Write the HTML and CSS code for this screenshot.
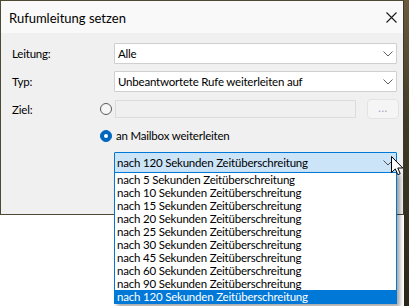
FILE: index.html
```html
<!DOCTYPE html>
<html lang="de">
<head>
<meta charset="utf-8">
<link rel="stylesheet" href="styles.css">
</head>
<body>
<div class="screen">
  <div class="main">
    <div class="dialog">
      <div class="titlebar">
        <span class="title">Rufumleitung setzen</span>
        <svg class="close" width="11" height="11" viewBox="0 0 11 11"><path d="M0.5 0.5 L10.5 10.5 M10.5 0.5 L0.5 10.5" stroke="#1a1a1a" stroke-width="1.1" fill="none"/></svg>
      </div>
      <div class="content">
        <div class="row">
          <span class="label">Leitung:</span>
          <div class="combo"><span class="value">Alle</span><svg class="chev" width="10" height="6" viewBox="0 0 10 6"><path d="M0.5 0.5 L5 5 L9.5 0.5" stroke="#606060" stroke-width="1" fill="none"/></svg></div>
        </div>
        <div class="row">
          <span class="label">Typ:</span>
          <div class="combo"><span class="value">Unbeantwortete Rufe weiterleiten auf</span><svg class="chev" width="10" height="6" viewBox="0 0 10 6"><path d="M0.5 0.5 L5 5 L9.5 0.5" stroke="#606060" stroke-width="1" fill="none"/></svg></div>
        </div>
        <div class="row ziel">
          <span class="label short">Ziel:</span>
          <span class="radio"></span>
          <div class="textbox"></div>
          <div class="btn">...</div>
        </div>
        <div class="row mailbox">
          <span class="radio checked"></span>
          <span class="radio-label">an Mailbox weiterleiten</span>
        </div>
        <div class="row indent">
          <div class="combo focus"><span class="value">nach 120 Sekunden Zeitüberschreitung</span><svg class="chev" width="10" height="6" viewBox="0 0 10 6"><path d="M0.5 0.5 L5 5 L9.5 0.5" stroke="#505050" stroke-width="1" fill="none"/></svg></div>
        </div>
      </div>
    </div>
  </div>
  <div class="strip"></div>
  <ul class="droplist">
    <li>nach 5 Sekunden Zeitüberschreitung</li>
    <li>nach 10 Sekunden Zeitüberschreitung</li>
    <li>nach 15 Sekunden Zeitüberschreitung</li>
    <li>nach 20 Sekunden Zeitüberschreitung</li>
    <li>nach 25 Sekunden Zeitüberschreitung</li>
    <li>nach 30 Sekunden Zeitüberschreitung</li>
    <li>nach 45 Sekunden Zeitüberschreitung</li>
    <li>nach 60 Sekunden Zeitüberschreitung</li>
    <li>nach 90 Sekunden Zeitüberschreitung</li>
    <li class="selected">nach 120 Sekunden Zeitüberschreitung</li>
  </ul>
  <svg class="cursor" width="13" height="20" viewBox="0 0 13 20"><path d="M0.5 0.5 L0.5 16.5 L4.3 12.9 L6.8 18.7 L9.2 17.7 L6.8 12 L11.8 12 Z" fill="#fff" stroke="#000" stroke-width="1" stroke-linejoin="miter"/></svg>
</div>
</body>
</html>
```

FILE: styles.css
```css
* { box-sizing: border-box; }
html, body {
  margin: 0;
  padding: 0;
  background: #ffffff;
}
body {
  width: 409px;
  height: 306px;
  overflow: hidden;
  font-family: Lato, "Liberation Sans", sans-serif;
  font-size: 11.5px;
  letter-spacing: -0.2px;
  color: #000;
}
.screen {
  position: relative;
  width: 409px;
  height: 306px;
  display: flex;
  background: #ffffff;
}
.main {
  width: 404px;
  display: flex;
  flex-direction: column;
}
.strip {
  flex: 1;
  background: linear-gradient(180deg, #6b5a3f 0%, #3f3a26 40%, #2a261b 100%);
}
.dialog {
  height: 215px;
  background: #f0f0f0;
  border: 1px solid #4d4a33;
  border-right-color: #3c3a2c;
  display: flex;
  flex-direction: column;
}
.titlebar {
  height: 32px;
  background: #f9f9f9;
  display: flex;
  align-items: center;
  justify-content: space-between;
  padding: 1px 9px 0 8px;
}
.title {
  font-size: 13px;
  letter-spacing: 0;
  line-height: 16px;
}
.close {
  display: block;
  margin-right: -3px;
}
.content {
  padding: 10px 0 0 11px;
  display: flex;
  flex-direction: column;
}
.row {
  display: flex;
  align-items: center;
}
.row + .row { margin-top: 7px; }
.label {
  width: 102px;
  flex: none;
}
.label.short { width: 88px; }
.combo {
  width: 283px;
  height: 21px;
  background: #ffffff;
  border: 1px solid #cfcfcf;
  display: flex;
  align-items: center;
  justify-content: space-between;
  padding: 0 3px 0 3px;
  border-radius: 1px;
}
.combo .value {
  line-height: 16px;
  white-space: nowrap;
}
.chev { display: block; margin-top: 1px; }
.combo.focus {
  background: #cce4f7;
  border-color: #0078d7;
  padding-left: 2px;
}
.ziel { height: 20px; }
.radio {
  width: 12px;
  height: 12px;
  border: 1px solid #5a5a5a;
  border-radius: 50%;
  background: #f7f7f7;
  flex: none;
}
.radio.checked {
  background: #0067c0;
  border-color: #0067c0;
  display: flex;
  align-items: center;
  justify-content: center;
}
.radio.checked::after {
  content: "";
  width: 4px;
  height: 4px;
  border-radius: 50%;
  background: #fff;
}
.textbox {
  width: 241px;
  height: 18px;
  margin-left: 3px;
  background: #f0f0f0;
  border: 1px solid #dcdcdc;
}
.btn {
  width: 32px;
  height: 20px;
  margin-left: 11px;
  background: #f5f5f5;
  border: 1px solid #e3e3e3;
  border-radius: 4px;
  color: #a09bb8;
  font-size: 11px;
  text-align: center;
  line-height: 15px;
  letter-spacing: 0.5px;
}
.row.mailbox {
  margin-top: 9px;
  padding-left: 88px;
  height: 16px;
}
.radio-label {
  margin-left: 4px;
  line-height: 16px;
}
.row.indent {
  margin-top: 8px;
  padding-left: 102px;
}
.droplist {
  position: absolute;
  left: 114px;
  top: 172px;
  width: 283px;
  margin: 0;
  padding: 0;
  list-style: none;
  background: #ffffff;
  border: 1px solid #0078d7;
  box-shadow: 3px 3px 4px rgba(0, 0, 0, 0.35);
}
.droplist li {
  height: 13px;
  line-height: 13px;
  padding-left: 2px;
  white-space: nowrap;
}
.droplist li.selected {
  background: #0078d7;
  color: #ffffff;
}
.cursor {
  position: absolute;
  left: 391px;
  top: 156px;
  display: block;
}
```
